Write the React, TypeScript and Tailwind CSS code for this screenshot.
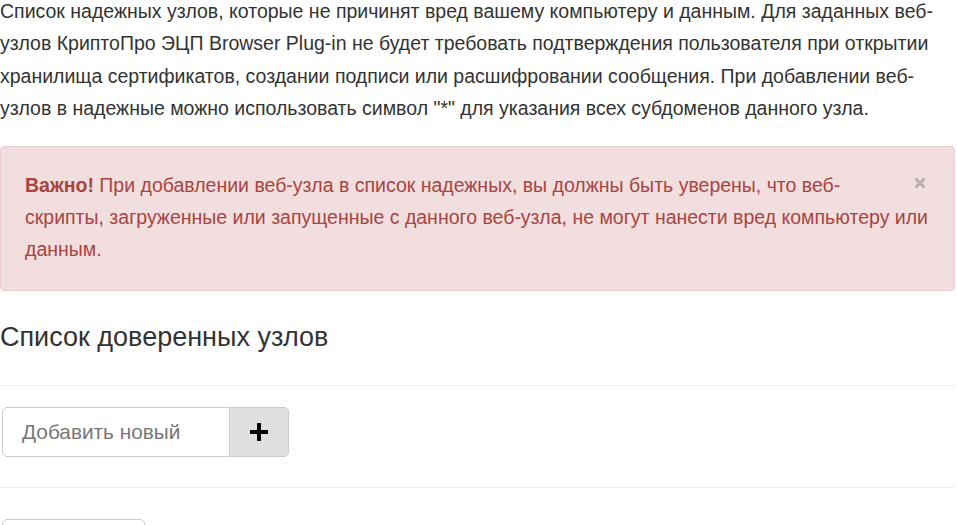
export default function App() {
  return (
    <div className="w-[957px] h-[525px] overflow-hidden bg-white font-['Liberation_Sans',Arial,sans-serif] text-[#333]">
      <div className="w-[955px] -mt-[5px]">
        <p className="text-[19.5px] leading-[32.4px] mb-[21px]">
          Список надежных узлов, которые не причинят вред вашему компьютеру и данным. Для заданных веб-узлов КриптоПро ЭЦП Browser Plug-in не будет требовать подтверждения пользователя при открытии хранилища сертификатов, создании подписи или расшифровании сообщения. При добавлении веб-узлов в надежные можно использовать символ "*" для указания всех субдоменов данного узла.
        </p>

        <div className="rounded-[4px] border border-[#ebccd1] bg-[#f2dede] pl-[24px] pr-[18px] pt-[22px] pb-[24px] text-[19.5px] leading-[32.4px] text-[#a94442]">
          <button type="button" className="float-right mt-[8px] mr-[10px]" aria-label="close">
            <svg width="12" height="12" viewBox="0 0 12 12">
              <path d="M1.5 1.5L10.5 10.5M10.5 1.5L1.5 10.5" stroke="#000" strokeOpacity="0.22" strokeWidth="3" />
            </svg>
          </button>
          <strong className="font-bold">Важно!</strong> При добавлении веб-узла в список надежных, вы должны быть уверены, что веб-скрипты, загруженные или запущенные с данного веб-узла, не могут нанести вред компьютеру или данным.
        </div>

        <h3 className="mt-[32px] text-[27px] leading-[1.1] font-normal text-[#333]">Список доверенных узлов</h3>

        <hr className="mt-[32px] border-0 border-t border-[#eee]" />

        <div className="mt-[21px] ml-[2px] flex">
          <input
            type="text"
            placeholder="Добавить новый"
            className="w-[228px] h-[50px] rounded-l-[5px] border border-[#ccc] bg-white pl-[19px] text-[20.8px] text-[#555] placeholder:text-[#777] outline-none"
          />
          <button type="button" className="w-[60px] h-[50px] -ml-px rounded-r-[5px] border border-[#ccc] bg-[#e0e0e0] flex items-center justify-center">
            <svg width="18" height="18" viewBox="0 0 18 18">
              <rect x="7" y="0" width="4" height="18" fill="#000" />
              <rect x="0" y="7" width="18" height="4" fill="#000" />
            </svg>
          </button>
        </div>

        <hr className="mt-[30px] border-0 border-t border-[#eee]" />

        <div className="mt-[31px] ml-[2px] w-[143px] h-[46px] rounded-[5px] border border-[#ccc] bg-white" />
      </div>
    </div>
  );
}
